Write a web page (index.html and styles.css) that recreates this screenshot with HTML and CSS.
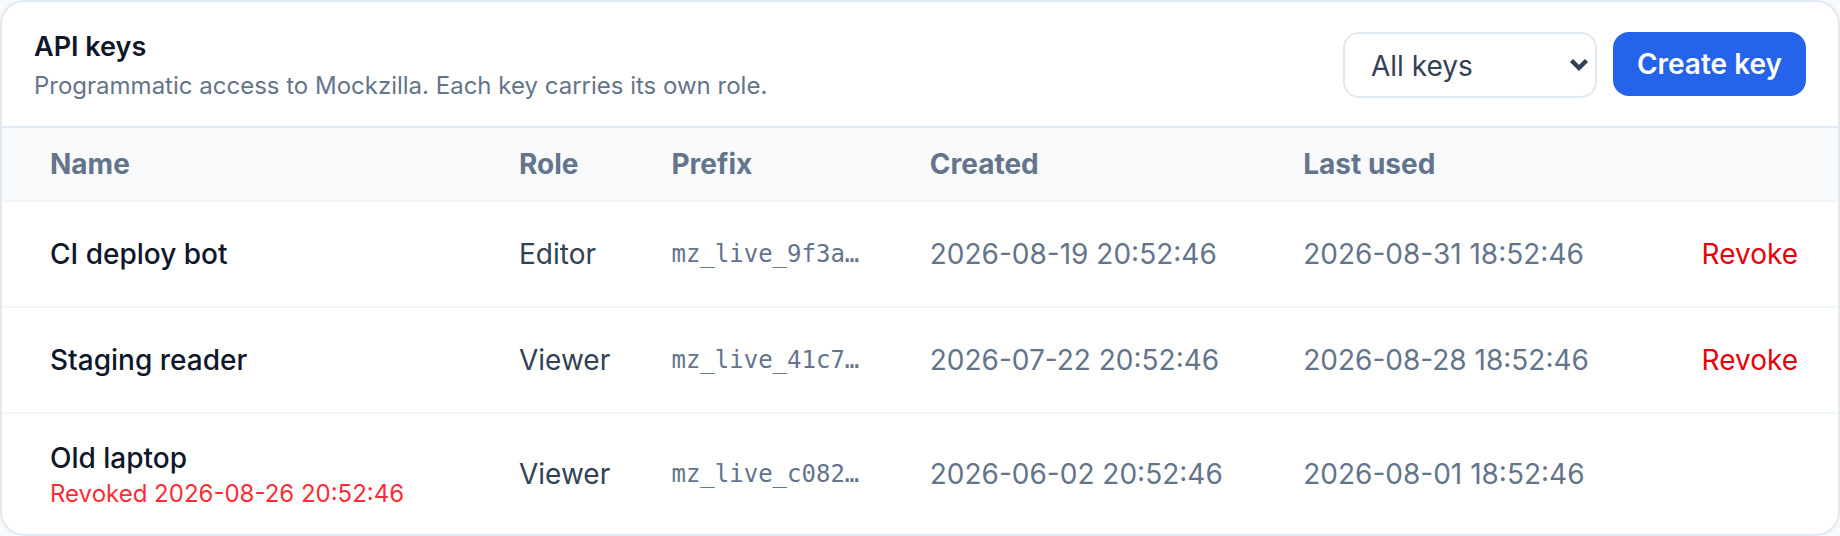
FILE: index.html
```html
<!DOCTYPE html>
<html lang="en">
<head>
<meta charset="utf-8">
<title>API keys</title>
<link rel="stylesheet" href="styles.css">
</head>
<body>
<section class="card" aria-labelledby="keys-title">
  <header class="card-header">
    <div class="heading">
      <h2 class="title" id="keys-title">API keys</h2>
      <p class="subtitle">Programmatic access to Mockzilla. Each key carries its own role.</p>
    </div>
    <div class="actions">
      <div class="select-wrap">
        <select class="select" aria-label="Filter keys">
          <option>All keys</option>
          <option>Active keys</option>
          <option>Revoked keys</option>
        </select>
        <svg class="chevron" viewBox="0 0 20 14" aria-hidden="true"><path d="M2.500 2.500 10 10l7.500-7.500" fill="none" stroke="currentColor" stroke-width="4.400"/></svg>
      </div>
      <button class="btn-primary" type="button">Create key</button>
    </div>
  </header>
  <table class="keys">
    <thead>
      <tr>
        <th scope="col">Name</th>
        <th scope="col">Role</th>
        <th scope="col">Prefix</th>
        <th scope="col">Created</th>
        <th scope="col">Last used</th>
        <td></td>
      </tr>
    </thead>
    <tbody>
      <tr>
        <td class="name">CI deploy bot</td>
        <td class="role">Editor</td>
        <td class="prefix">mz_live_9f3a…</td>
        <td>2026-08-19 20:52:46</td>
        <td>2026-08-31 18:52:46</td>
        <td class="row-actions"><button class="btn-revoke" type="button">Revoke</button></td>
      </tr>
      <tr>
        <td class="name">Staging reader</td>
        <td class="role">Viewer</td>
        <td class="prefix">mz_live_41c7…</td>
        <td>2026-07-22 20:52:46</td>
        <td>2026-08-28 18:52:46</td>
        <td class="row-actions"><button class="btn-revoke" type="button">Revoke</button></td>
      </tr>
      <tr>
        <td class="name">Old laptop<div class="revoked">Revoked 2026-08-26 20:52:46</div></td>
        <td class="role">Viewer</td>
        <td class="prefix">mz_live_c082…</td>
        <td>2026-06-02 20:52:46</td>
        <td>2026-08-01 18:52:46</td>
        <td></td>
      </tr>
    </tbody>
  </table>
</section>
</body>
</html>
```
FILE: styles.css
```css
*, *::before, *::after {
  box-sizing: border-box;
}

body {
  margin: 0;
  background: #f8fafc;
  color: #334155;
  font-family: Inter, "Liberation Sans", sans-serif;
  font-size: 28px;
  line-height: 40px;
}

.card {
  overflow: hidden;
  border: 2px solid #e2e8f0;
  border-radius: 24px;
  background: #fff;
}

.card-header {
  display: flex;
  justify-content: space-between;
  gap: 32px;
  padding: 24px 32px;
  border-bottom: 2px solid #e2e8f0;
}

.title {
  margin: 0;
  color: #0f172a;
  font-size: 27px;
  font-weight: 600;
  line-height: 42px;
}

.subtitle {
  margin: 2px 0 0;
  color: #64748b;
  font-size: 24px;
  line-height: 32px;
}

.actions {
  display: flex;
  align-items: flex-start;
  gap: 16px;
  padding-top: 6px;
}

.select-wrap {
  display: grid;
  align-items: center;
  justify-items: end;
  color: #334155;
}

.select,
.chevron {
  grid-area: 1 / 1;
}

.select {
  appearance: none;
  width: 254px;
  padding: 12px 56px 10px 26px;
  border: 2px solid #e2e8f0;
  border-radius: 16px;
  background: #fff;
  color: inherit;
  font: inherit;
}

.chevron {
  width: 20px;
  height: 14px;
  margin-right: 8px;
  pointer-events: none;
}

.btn-primary {
  padding: 12px 24px;
  border: 0;
  border-radius: 16px;
  background: #2563eb;
  color: #fff;
  font: inherit;
  font-weight: 600;
  white-space: nowrap;
}

.keys {
  width: 100%;
  border-collapse: separate;
  border-spacing: 0;
  color: #64748b;
  text-align: left;
  white-space: nowrap;
}

.keys th,
.keys td {
  padding: 24px;
  border-bottom: 2px solid #f1f5f9;
}

.keys thead th,
.keys thead td {
  padding-top: 16px;
  padding-bottom: 16px;
  background: #f8fafc;
  font-weight: 700;
}

.keys th:first-child,
.keys td:first-child {
  padding-left: 48px;
  padding-right: 48px;
}

.keys tbody tr:last-child td {
  border-bottom: 0;
}

.keys .name {
  color: #0f172a;
  font-weight: 500;
}

.keys .role {
  color: #334155;
}

.keys .prefix {
  font-family: "DejaVu Sans Mono", monospace;
  font-size: 24px;
}

.revoked {
  color: #fb2c36;
  font-size: 24px;
  font-weight: 400;
  line-height: 32px;
}

.keys .row-actions {
  text-align: right;
}

.btn-revoke {
  display: inline-block;
  padding: 8px 16px;
  border: 0;
  border-radius: 12px;
  background: transparent;
  color: #e7000b;
  font: inherit;
  vertical-align: top;
}
```
